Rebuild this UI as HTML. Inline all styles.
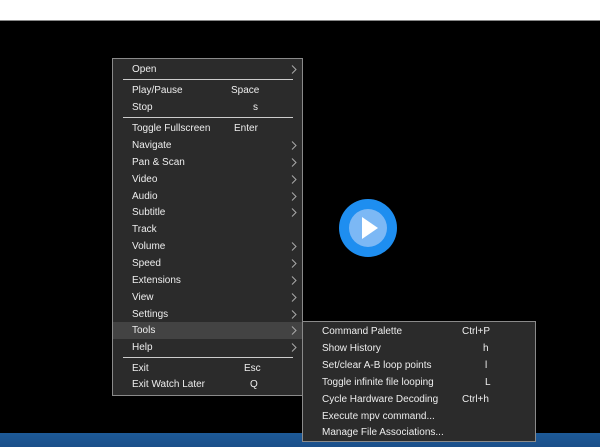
<!DOCTYPE html><html><head><style>
body{margin:0;width:600px;height:447px;background:#000;position:relative;overflow:hidden;font-family:"Liberation Sans","DejaVu Sans",sans-serif;font-size:10px;color:#eee}
.top{position:absolute;left:0;top:0;width:600px;height:20px;background:#fff;border-bottom:1px solid #888}
.bot{position:absolute;left:0;top:433px;width:600px;height:14px;background:linear-gradient(#1d5a98,#1b4f8a)}
.m{position:absolute;background:#2b2b2b;border:1px solid #8a8a8a}
.r{position:absolute;height:17px;line-height:17px}
.r .k{position:absolute}
.sep{position:absolute;height:1px;background:#ccc}
.ar{position:absolute;right:5px;top:4px;width:6px;height:9px}
</style></head><body>
<div class="top"></div>
<div class="bot"></div>
<svg style="position:absolute;left:338px;top:198px" width="60" height="60"><circle cx="30" cy="30" r="29" fill="#1e8ef0"/><circle cx="30" cy="30" r="19" fill="#7cb8f5"/><path d="M24 19 L40 30 L24 41Z" fill="#fff"/></svg>
<div class="m" style="left:112px;top:58px;width:189px;height:336px">
<div class="r" style="top:2px;left:0;width:189px"><span style="margin-left:19px">Open</span><svg class="ar" viewBox="0 0 6 9"><path d="M1 0.5 L5 4.5 L1 8.5" stroke="#aaa" fill="none"/></svg></div>
<div class="sep" style="left:10px;width:170px;top:20px"></div>
<div class="r" style="top:23px;left:19px;width:170px">Play/Pause<span class="k" style="left:99px">Space</span></div>
<div class="r" style="top:40px;left:19px;width:170px">Stop<span class="k" style="left:121px">s</span></div>
<div class="sep" style="left:10px;width:170px;top:58px"></div>
<div class="r" style="top:61px;left:19px;width:170px">Toggle Fullscreen<span class="k" style="left:102px">Enter</span></div>
</div>
<div class="m" style="left:302px;top:321px;width:232px;height:119px"></div>
<div id="list"></div>
<script>
var items=["Navigate","Pan &amp; Scan","Video","Audio","Subtitle","Track","Volume","Speed","Extensions","View","Settings","Tools","Help"];
var arr=[1,1,1,1,1,0,1,1,1,1,1,1,1],h="";
var chev='<svg class="ar" viewBox="0 0 6 9"><path d="M1 0.5 L5 4.5 L1 8.5" stroke="#aaa" fill="none"/></svg>';
for(var i=0;i<items.length;i++){var t=137+i*16.85;
h+='<div class="r" style="left:113px;top:'+t+'px;width:189px;'+(i==11?'background:#434343;':'')+'"><span style="margin-left:19px">'+items[i]+'</span>'+(arr[i]?chev:'')+'</div>';}
h+='<div class="sep" style="left:123px;width:170px;top:357px"></div>';
h+='<div class="r" style="left:132px;top:360px">Exit<span class="k" style="left:112px">Esc</span></div>';
h+='<div class="r" style="left:132px;top:376px;width:150px">Exit Watch Later<span class="k" style="left:118px">Q</span></div>';
var s=[["Command Palette","Ctrl+P",140],["Show History","h",161],["Set/clear A-B loop points","l",163],["Toggle infinite file looping","L",163],["Cycle Hardware Decoding","Ctrl+h",140],["Execute mpv command...","",0],["Manage File Associations...","",0]];
for(var j=0;j<s.length;j++){h+='<div class="r" style="left:322px;top:'+(323+j*16.9)+'px;width:200px">'+s[j][0]+'<span class="k" style="left:'+s[j][2]+'px">'+s[j][1]+'</span></div>';}
document.getElementById('list').innerHTML=h;
</script>
</body></html>
